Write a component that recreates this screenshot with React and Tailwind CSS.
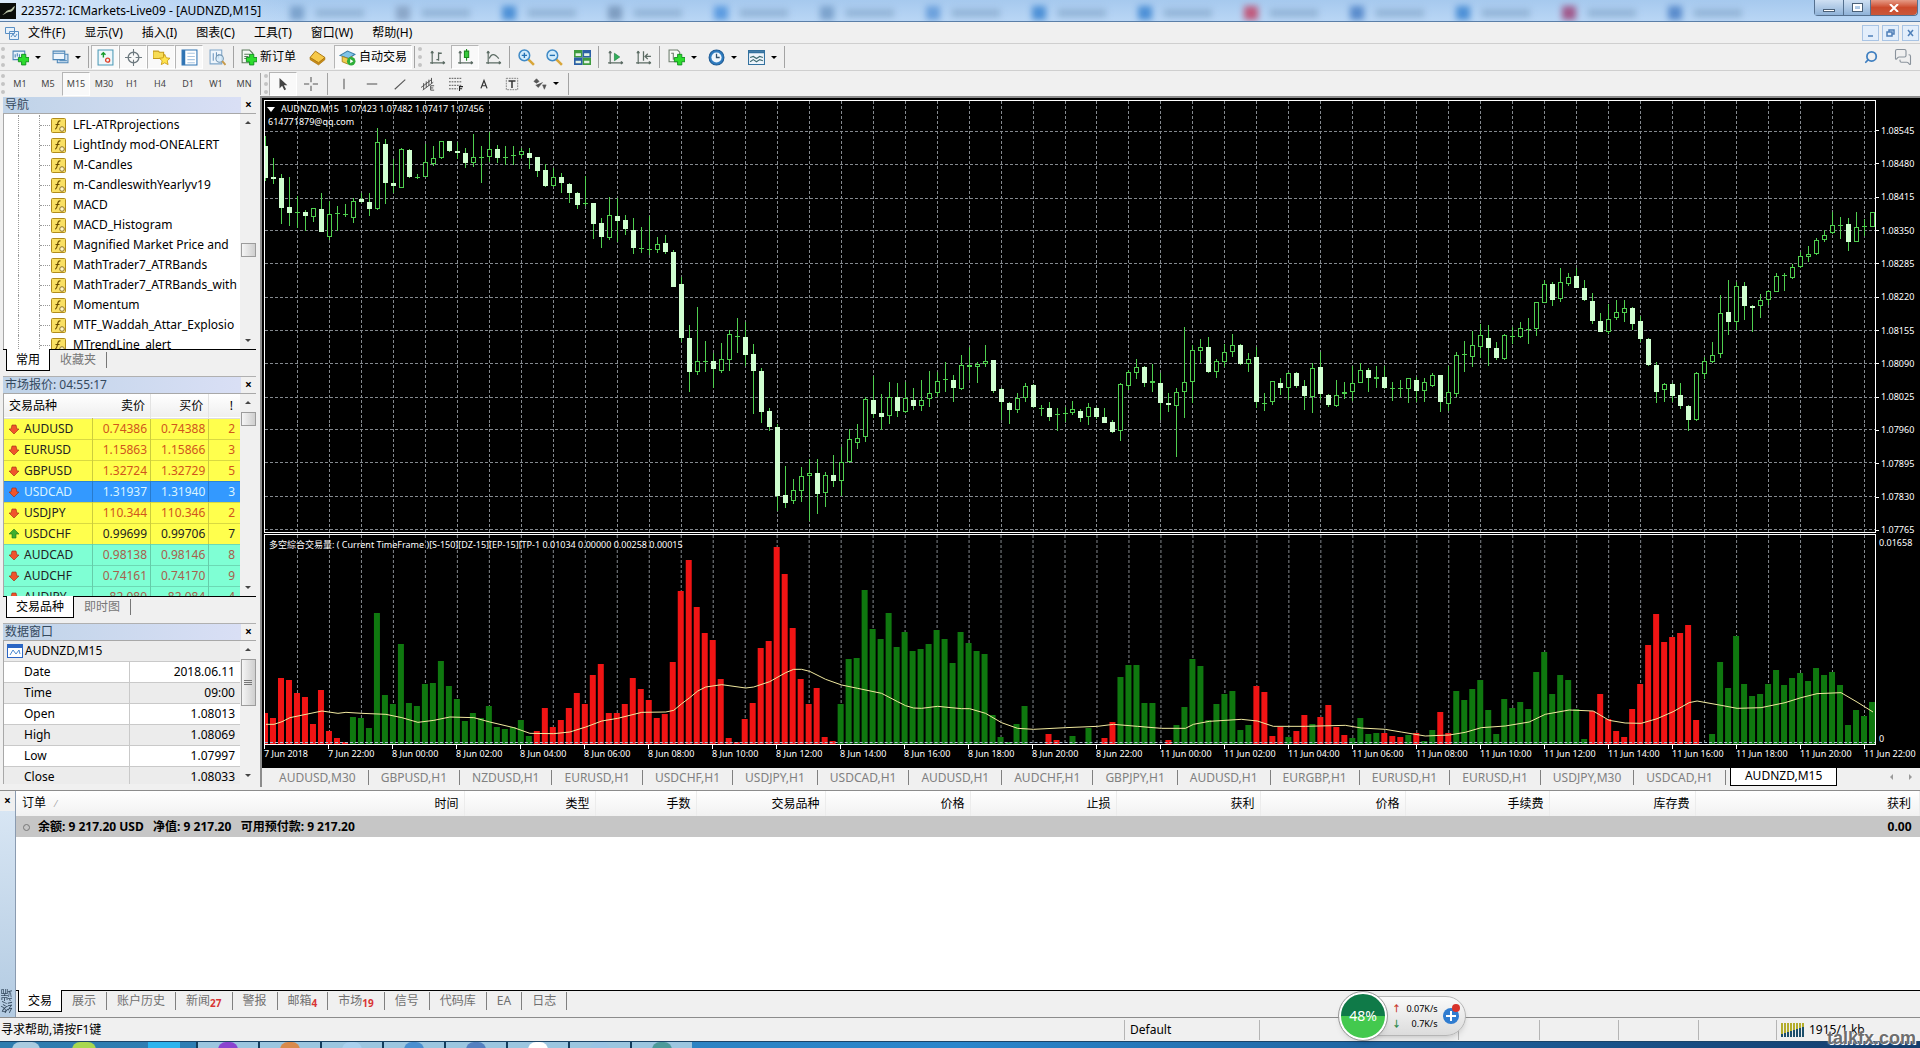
import { useState } from 'react'
import { Search, MessagesSquare } from 'lucide-react'

const FONT = "font-['Noto_Sans','Noto_Sans_CJK_SC',sans-serif]"

const MENUS = ['文件(F)', '显示(V)', '插入(I)', '图表(C)', '工具(T)', '窗口(W)', '帮助(H)']
const PERIODS = ['M1', 'M5', 'M15', 'M30', 'H1', 'H4', 'D1', 'W1', 'MN']
const INDICATORS = [
  'LFL-ATRprojections', 'LightIndy mod-ONEALERT', 'M-Candles', 'm-CandleswithYearlyv19', 'MACD', 'MACD_Histogram',
  'Magnified Market Price and', 'MathTrader7_ATRBands', 'MathTrader7_ATRBands_with', 'Momentum', 'MTF_Waddah_Attar_Explosio', 'MTrendLine_alert',
]
const QUOTES = [
  ['AUDUSD', '0.74386', '0.74388', 2, 'yellow'],
  ['EURUSD', '1.15863', '1.15866', 3, 'yellow'],
  ['GBPUSD', '1.32724', '1.32729', 5, 'yellow'],
  ['USDCAD', '1.31937', '1.31940', 3, 'selected'],
  ['USDJPY', '110.344', '110.346', 2, 'yellow'],
  ['USDCHF', '0.99699', '0.99706', 7, 'up'],
  ['AUDCAD', '0.98138', '0.98146', 8, 'mint'],
  ['AUDCHF', '0.74161', '0.74170', 9, 'mint'],
  ['AUDJPY', '82.080', '82.084', 4, 'mint'],
]
const QUOTE_ROW = {
  yellow: 'bg-[#ffff4d] text-[#d0561c]',
  selected: 'bg-[#3399ff] text-[#d9f4ff]',
  up: 'bg-[#ffff4d] text-[#222]',
  mint: 'bg-[#7fffd4] text-[#a8604c]',
}
const DATA_WINDOW = [['Date', '2018.06.11'], ['Time', '09:00'], ['Open', '1.08013'], ['High', '1.08069'], ['Low', '1.07997'], ['Close', '1.08033']]
const CHART_TABS = [
  'AUDUSD,M30', 'GBPUSD,H1', 'NZDUSD,H1', 'EURUSD,H1', 'USDCHF,H1', 'USDJPY,H1', 'USDCAD,H1', 'AUDUSD,H1', 'AUDCHF,H1',
  'GBPJPY,H1', 'AUDUSD,H1', 'EURGBP,H1', 'EURUSD,H1', 'EURUSD,H1', 'USDJPY,M30', 'USDCAD,H1', 'AUDNZD,M15',
]
const PRICES = ['1.08545', '1.08480', '1.08415', '1.08350', '1.08285', '1.08220', '1.08155', '1.08090', '1.08025', '1.07960', '1.07895', '1.07830', '1.07765']
const TIMES = [
  '7 Jun 2018', '7 Jun 22:00', '8 Jun 00:00', '8 Jun 02:00', '8 Jun 04:00', '8 Jun 06:00', '8 Jun 08:00', '8 Jun 10:00', '8 Jun 12:00',
  '8 Jun 14:00', '8 Jun 16:00', '8 Jun 18:00', '8 Jun 20:00', '8 Jun 22:00', '11 Jun 00:00', '11 Jun 02:00', '11 Jun 04:00', '11 Jun 06:00',
  '11 Jun 08:00', '11 Jun 10:00', '11 Jun 12:00', '11 Jun 14:00', '11 Jun 16:00', '11 Jun 18:00', '11 Jun 20:00', '11 Jun 22:00',
]
const ORDER_COLS = [
  ['时间', 'w-[260px]'], ['类型', 'w-[131px]'], ['手数', 'w-[101px]'], ['交易品种', 'w-[129px]'], ['价格', 'w-[145px]'], ['止损', 'w-[146px]'],
  ['获利', 'w-[144px]'], ['价格', 'w-[145px]'], ['手续费', 'w-[144px]'], ['库存费', 'w-[146px]'], ['获利', ''],
]
const TERMINAL_TABS = [['交易'], ['展示'], ['账户历史'], ['新闻', 27], ['警报'], ['邮箱', 4], ['市场', 19], ['信号'], ['代码库'], ['EA'], ['日志']]

// high, open/close top, open/close bottom, low, kind (f = falling, h = rising, d = doji), in thirds of a pixel
const parse = (text, base) => text.trim().split(/\s*;\s*/).map(row => {
  const [hi, top, bot, lo, kind] = row.split(' ')
  return { hi: (+hi + base) / 3, top: (+top + base) / 3, bot: (+bot + base) / 3, lo: (+lo + base) / 3, kind }
})
const CANDLES = [
  ...parse(`120 150 245 255 f;185 243 250 265 f;235 245 335 387 f;243 333 353 393 f;300 352 354 400 d;345 352 363 408 f;335 337 365 380 h;290 340 410 412 f;315 357 427 435 h;330 355 358 408 d;325 358 361 365 d;305 315 368 385 h;290 310 318 320 f;290 317 340 362 f;95 138 342 345 h;130 143 260 325 f;190 260 269 290 f;155 158 275 277 h;160 163 243 245 f;235 242 245 250 d;143 198 242 243 h;150 185 205 210 h;135 136 187 190 h;135 136 165 168 f;137 165 172 190 f;155 172 202 215 f;115 184 200 212 h;150 184 187 260 d;107 158 182 197 h;148 160 185 200 f;150 184 188 207 d;150 178 183 207 d;155 165 178 187 h;155 170 185 218 f;183 184 225 243 f;205 222 270 272 f;215 244 270 272 h;232 243 262 292 f;260 263 290 320 f;288 290 328 338 f;240 322 326 330 d;320 321 387 432 f;370 385 425 458 f;303 360 428 435 h;305 362 377 440 f;360 375 402 420 f;370 404 460 478 f;395 460 464 475 d;362 462 466 480 d;425 447 464 475 h;420 444 472 478 f;465 472 575 577 f;545 568 728 740 f;690 730 830 890 f;635 798 830 840 h;738 797 800 830 d;775 798 823 880 f;745 792 828 835 h;705 717 795 828 h;670 723 727 775 d;680 726 780 812 f;748 778 827 957 f;820 827 950 985 f;940 948 1000 1012 f;990 998 1207 1250 f;1115 1204 1227 1243 f;1155 1187 1222 1230 h;1120 1145 1190 1225 h;1095 1137 1145 1280 h;1095 1137 1200 1260 f`, -15),
  ...parse(`730 738 793 835 h;678 738 755 773 f;655 700 755 800 h;600 630 700 702 h;585 627 642 660 h;500 507 623 640 h;437 510 552 565 f;492 550 560 603 f;455 502 557 582 h;460 502 542 562 f;455 503 545 550 h;475 510 527 540 f;450 510 528 543 h;422 490 508 530 h;427 453 488 500 h;395 447 453 485 d;435 450 473 515 f;375 405 477 480 h;350 405 412 450 h;397 402 410 458 h;345 392 402 412 h;390 391 482 490 f;475 478 517 570 f;515 518 540 582 f;488 503 540 548 h;460 468 503 515 h;463 465 530 535 f;525 533 537 557 d;515 535 560 572 f;535 552 556 605 d;530 550 553 575 d;512 537 550 555 h;537 542 563 575 f;518 532 560 587 h;530 534 560 568 f;535 560 578 580 f;570 577 610 612 f;460 463 607 637 h;420 427 467 480 h;388 410 430 447 h;408 411 460 470 f;403 452 458 485 h;430 458 520 570 f;490 520 525 547 f;475 487 527 683 h;292 455 487 565 h;345 360 457 520 h;327 351 364 398 h;320 351 425 430 f;388 394 425 443 h;343 365 397 410 h;312 345 365 382 h;343 346 402 404 f;370 387 402 425 h;350 382 517 535 f;490 518 521 543 d;452 454 517 525 h;445 460 473 495 f;425 430 475 510 h;427 430 467 475 f;450 467 497 540 f;400 415 502 550 h;367 411 493 510 f;492 495 525 530 f;450 495 527 530 h;455 485 493 507 h`, 390),
  ...parse(`812 865 890 918 h;805 825 863 865 h;820 825 850 890 f;812 846 852 878 h;812 846 880 883 f;860 880 884 918 d;855 879 883 905 d;848 850 882 925 h;845 855 887 920 f;850 862 888 920 h;835 841 872 875 h;840 841 922 950 f;812 892 926 948 h;772 781 896 905 h;738 777 783 830 d;708 751 785 817 h;688 721 755 790 h;690 730 758 812 f;740 760 790 795 f;718 721 791 795 h;695 723 728 748 d;682 700 725 728 h;668 703 708 747 d;620 622 702 722 h;555 567 623 625 h;562 567 615 632 f;520 562 612 622 h;535 546 566 573 h;520 544 578 580 f;555 580 615 618 f;595 618 678 688 f;655 678 710 712 f;628 672 710 718 h;615 652 668 675 h;615 640 655 680 h;635 640 687 705 f;662 678 733 740 f;730 732 810 812 f;800 810 890 925 f;865 867 886 920 h;865 867 902 920 f;865 901 934 942 f;930 934 976 1010 f;830 835 976 978 h;785 798 838 852 h;742 780 800 805 h;600 655 778 790 h;555 652 681 720 f;560 574 682 705 h;562 574 632 675 f;630 632 640 712 f;598 616 634 668 h;585 589 616 630 h;535 544 590 592 h;535 541 546 588 d;508 516 550 552 h;470 484 517 520 h;452 478 487 500 h;430 436 476 480 h;405 419 434 440 h;352 391 415 418 h;365 390 394 432 d;370 388 440 468 f;352 397 440 442 h;372 394 397 422 d;350 352 395 397 h`, -15),
]

// histogram tops in thirds of a pixel; each run keeps its colour until the next letter
const VOLUMES = `r 545 560 442 447 487 498 578 478 600 620 634 g 557 560 592 247 492 518 340 517 525 458 455 390 465 503 570 547 560 525 588 595 588 568 615
r 600 532 588 567 532 487 520 432 400 547 545 520 440 475 508 562 550 392 180 87 227 307 328 445 620 634 563 517 352 330 48 130 290 445 520 472 618 630
g 518 384 382 178 295 325 247 347 303 360 355 340 298 325 395 303 337 360 370 553 618 634 578 525 640 640 r 608 627 640 g 614 640 592 640 r 620 573
g 438 403 403 515 515 640 r 627 g 583 528 383 405 567 520 488 480 597 583 r 465 484 615 588 g 618 r 600 552 g 580 r 558 523 588 612
g 622 562 610 606 r 605 615 618 g 612 r 605 g 630 598 r 542 605 g 480 508 475 447 538 610 505 530 512 533 422 363 490 433 447 535 623
r 540 490 565 600 618 535 458 343 250 333 317 307 283 568 g 640 610 393 472 315 460 495 488 460 418 463 440 425 450 411 433 422 463 583 538 555 512`
  .split(/\s+/)
  .reduce((acc, v) => {
    if (v === 'r' || v === 'g') acc.color = v
    else acc.bars.push({ top: Math.round((+v - 12) / 3), color: acc.color })
    return acc
  }, { bars: [], color: 'r' }).bars

const AVERAGE = '0,580 1,580 2,572 3,560 5,550 7,540 9,547 10,544 12,547 15,550 17,560 19,574 21,568 23,558 26,560 28,573 31,590 33,607 36,608 38,603 40,588 42,570 44,562 47,544 50,543 51,538 52,518 53,500 54,480 55,468 57,461 60,471 61,468 63,452 65,425 66,415 67,415 68,421 70,445 72,462 74,472 77,487 79,512 80,524 81,531 82,532 84,526 87,533 88,533 90,547 92,575 94,592 96,595 100,590 104,586 106,580 109,586 112,592 115,592 116,580 118,571 122,565 124,570 126,586 130,586 135,583 137,591 140,595 142,603 145,615 148,612 150,604 152,590 155,585 158,573 160,550 163,537 166,540 168,568 170,576 172,577 174,563 176,542 178,515 179,510 182,523 184,532 187,530 190,515 192,500 194,488 197,485 199,513 201,543'
  .split(' ')
  .map(p => p.split(',').map(Number))
  .map(([i, y]) => `${i * 8 + 1},${(y - 12) / 3}`)
  .join(' ')

const Grid = ({ height, rows = [] }) => (
  <g stroke="#858a8f" strokeDasharray="3 2" shapeRendering="crispEdges">
    {Array.from({ length: 50 }, (_, i) => <line key={i} x1={32.5 + i * 32} x2={32.5 + i * 32} y1="0" y2={height} />)}
    {rows.map(y => <line key={y} x1="0" x2="1611" y1={y} y2={y} />)}
  </g>
)

function PricePlot() {
  return (
    <svg viewBox="0 0 1611 433" preserveAspectRatio="none" className="block w-full h-full">
      <Grid height={433} rows={PRICES.map((_, i) => Math.round(30 + i * 33.33) + 0.5)} />
      <g shapeRendering="crispEdges" stroke="#4fd04f">
        {CANDLES.map((c, i) => {
          const x = i * 8
          const top = Math.round(c.top)
          const h = Math.max(1, Math.round(c.bot) - top)
          return (
            <g key={i}>
              <line x1={x + 0.5} x2={x + 0.5} y1={Math.round(c.hi)} y2={Math.round(c.lo)} />
              {c.kind === 'd' && <line x1={x - 2} x2={x + 3} y1={top + 0.5} y2={top + 0.5} />}
              {c.kind === 'f' && <rect x={x - 2} y={top} width="5" height={h} fill="#d0ffd0" stroke="none" />}
              {c.kind === 'h' && <rect x={x - 1.5} y={top + 0.5} width="4" height={Math.max(1, h - 1)} fill="#000" />}
            </g>
          )
        })}
      </g>
    </svg>
  )
}

function VolumePlot() {
  return (
    <svg viewBox="0 0 1611 209" preserveAspectRatio="none" className="block w-full h-full">
      <Grid height={209} />
      {VOLUMES.map((v, i) => v.top < 209 && (
        <rect key={i} x={i * 8 - 3} y={v.top} width="6" height={209 - v.top} fill={v.color === 'r' ? '#f01414' : '#0f780f'} />
      ))}
      <line x1="0" x2="1611" y1="207.5" y2="207.5" stroke="#a9bcd6" strokeDasharray="3 2" />
      <polyline points={AVERAGE} fill="none" stroke="#f2eaa0" />
    </svg>
  )
}

/* toolbar glyphs, all on a 16px box */
const Icon = ({ children, small }) => (
  <svg viewBox="0 0 16 16" fill="none" className={`shrink-0 ${small ? 'size-[14px]' : 'size-[17px]'}`}>{children}</svg>
)
const Plus = () => <path d="M9 5h4v3h3v4h-3v3h-4v-3H6V8h3z" fill="#2ddc2d" stroke="#0a8a1a" strokeWidth=".8" />
const Axes = () => <path d="M3 2v12M1 13h14M3 2 1.8 4M3 2l1.200 2M15 13l-2-1.200M15 13l-2 1.200" stroke="#5b6b63" strokeWidth="1.100" />
const ICONS = {
  newChart: <><path d="M1 2h11v8H1z" fill="#e6f1fb" stroke="#4d86b8" /><path d="M3 5v3M5 4v3M7 5v3" stroke="#4d86b8" /><Plus /></>,
  profiles: <><path d="M5 5h10v8H5z" fill="#d4e4f3" stroke="#4d86b8" /><path d="M1 2h11v8H1z" fill="#eef5fc" stroke="#4d86b8" /><path d="M1 4h11" stroke="#4d86b8" /><path d="M7 11h7" stroke="#4d86b8" /></>,
  watch: <><path d="M1 1h14v14H1z" fill="#eef7fb" stroke="#4d9ab8" /><path d="M6 8V3.500M4 5.500l2-2 2 2" stroke="#159a2b" strokeWidth="1.300" /><circle cx="10" cy="10.500" r="1.900" stroke="#e0402a" strokeWidth="1.300" /></>,
  target: <><circle cx="8" cy="8" r="5" stroke="#6e7a80" strokeWidth="1.300" /><path d="M8 0v6M8 10v6M0 8h6M10 8h6" stroke="#6e7a80" /></>,
  navigator: <><path d="M0 2h5l1 1h4v6H0z" fill="#f7dc55" stroke="#c49a1a" /><path d="m11 5 1.500 3.300 3.500.4-2.600 2.400.8 3.600L11 13l-3.200 1.700.8-3.600L6 8.700l3.500-.4z" fill="#ffe44d" stroke="#c99a10" strokeWidth=".8" /></>,
  dataWin: <><path d="M1 1h14v14H1z" fill="#fff" stroke="#2f74b4" /><path d="M1 1h3v14H1z" fill="#2f74b4" /><path d="M6 4h7M6 7h7M6 10h7M6 13h7" stroke="#a9c6e2" /></>,
  tester: <><path d="M1 1h11v13H1z" fill="#eef5fc" stroke="#7fa6c9" /><path d="M4 4v7M7 3v6M9 5v4" stroke="#6a95bd" /><circle cx="10" cy="9" r="3.500" fill="#d7ecfb" fillOpacity=".8" stroke="#7294b0" /><path d="m12.500 11.500 3 3.500" stroke="#c79a4a" strokeWidth="1.800" /></>,
  order: <><path d="M2 1h7l3 3v9H2z" fill="#f4f8f4" stroke="#5d7a5d" /><path d="M4 5h5M4 7h4M4 9h3" stroke="#5d7a5d" /><Plus /></>,
  gold: <><path d="m1 8 5-6 9 6-6 5z" fill="#f7c948" stroke="#a8750f" strokeWidth=".9" /><path d="m1 8 8 5 6-5v2l-6 5-8-5z" fill="#c98d18" stroke="#a8750f" strokeWidth=".6" /></>,
  auto: <><path d="M1 6 8 2l7 3-6 4z" fill="#7fc4e8" stroke="#3a7ea6" /><path d="M3 7v5l5 2 4-3V7L9 9z" fill="#f0cd50" stroke="#a68018" strokeWidth=".8" /><circle cx="11.500" cy="11.500" r="4" fill="#2fae3a" /><path d="m10.500 9.500 3 2-3 2z" fill="#fff" /></>,
  bars: <><Axes /><path d="M9 3v8M9 4h3M7 10h2" stroke="#5b6b63" strokeWidth="1.200" /></>,
  candle: <><Axes /><path d="M9 0v11" stroke="#188a1c" /><path d="M7 2h4v6H7z" fill="#36c93a" stroke="#188a1c" /></>,
  line: <><Axes /><path d="M4 9c2-5 5-5 9 0" stroke="#5b6b63" strokeWidth="1.200" /></>,
  zoomIn: <><path d="m9.500 9.500 5.500 5.500" stroke="#d8a63a" strokeWidth="2.400" /><circle cx="6" cy="6" r="5" fill="#d3ecfb" stroke="#3f8ac6" strokeWidth="1.400" /><path d="M6 3.500v5M3.500 6h5" stroke="#2472b4" strokeWidth="1.300" /></>,
  zoomOut: <><path d="m9.500 9.500 5.500 5.500" stroke="#d8a63a" strokeWidth="2.400" /><circle cx="6" cy="6" r="5" fill="#d3ecfb" stroke="#3f8ac6" strokeWidth="1.400" /><path d="M3.500 6h5" stroke="#2472b4" strokeWidth="1.300" /></>,
  tiles: <><path d="M0 1h8v7H0zM8 8h8v7H8z" fill="#3f9c3f" /><path d="M8 1h8v7H8zM0 8h8v7H0z" fill="#2b5fa5" /><path d="M1.500 4h5v2.500h-5zM9.500 4h5v2.500h-5zM1.500 11h5v2.500h-5zM9.500 11h5v2.500h-5z" fill="#e4f2e4" /></>,
  scroll: <><Axes /><path d="m7 4 5 3.500L7 11z" fill="#2fae5a" stroke="#1d7a3c" strokeWidth=".6" /></>,
  shift: <><Axes /><path d="M8 2v9M15 7h-5M12 4.500 9.500 7 12 9.500" stroke="#5b6b63" strokeWidth="1.200" /></>,
  indicator: <><path d="M1 1h8l2 2v9H1z" fill="#f8faf8" stroke="#6d7d6d" /><path d="M3 4h2v6" stroke="#6d7d6d" /><Plus /></>,
  clock: <><circle cx="8" cy="8" r="7" fill="#2f7cc0" stroke="#1d5a94" /><circle cx="8" cy="8" r="4.800" fill="#eef6fd" /><path d="M8 4.500V8h3" stroke="#33516b" strokeWidth="1.200" /></>,
  template: <><path d="M.5 1.500h15v13H.5z" fill="#eef5fc" stroke="#33719f" /><path d="M0 3h16" stroke="#33719f" strokeWidth="2" /><path d="m2 8 3-1 3 2 3-2 3 1M2 12l3-2 3 2 3-2 3 1" stroke="#3d6a70" /></>,
  cursor: <path d="M4 1v12l3-3 2.500 5 2-1L9 9.500h4z" fill="#444" />,
  cross: <path d="M8 0v6M8 10v6M0 8h6M10 8h6" stroke="#555" strokeWidth="1.200" />,
  vline: <path d="M8 2v12" stroke="#555" strokeWidth="1.200" />,
  hline: <path d="M2 8h12" stroke="#555" strokeWidth="1.200" />,
  trend: <path d="M2 14 14 3" stroke="#555" strokeWidth="1.200" />,
  channel: <><path d="m0 12 12-9M2 15 14 6M3 7v7M6 5v7M9 3v7M12 1v6" stroke="#444" /><path d="M15 10h-4v5h4M11 12.500h3" stroke="#444" /></>,
  fibo: <><path d="M0 1.500h15M0 5.500h15M0 9.500h15M0 13.500h10" stroke="#444" strokeDasharray="2 1" /><path d="M12 16v-5h4M12 13.500h3" stroke="#222" strokeWidth="1.200" /></>,
  text: <path d="m4.500 13 3.500-9 3.500 9M6 10h4" stroke="#333" strokeWidth="1.400" />,
  label: <><path d="M1.500 1.500h13v13h-13z" stroke="#777" strokeDasharray="2 1" /><path d="M4 4.500h8M8 4.500v8" stroke="#333" strokeWidth="1.700" /></>,
  arrows: <path d="m4 2 3 3-3 2-3-2zM3 9l3 3 5-6M11 9h4l-2 5z" fill="#555" stroke="#555" strokeWidth=".7" />,
}

const Sep = () => <span className="w-px h-[22px] bg-[#a3a3a3] mx-[2px]" />
const Grip = () => <span className="w-[4px] h-[20px] mx-px border-l-4 border-dotted border-[#c4c4c4]" />
const Caret = () => <span className="border-x-[3px] border-t-[3px] border-x-transparent border-t-black" />

function Tool({ name, label, active, menu, small, width = 'w-7' }) {
  return (
    <button aria-label={label || name}
      className={`h-6 flex items-center justify-center shrink-0 ${menu ? 'w-10 gap-[6px]' : label ? 'px-1 gap-[3px]' : width} ${active ? 'bg-[#f9f9f9] border border-[#b5b5b5] border-b-white border-r-white' : ''}`}>
      <Icon small={small}>{ICONS[name]}</Icon>
      {label && <span className="text-[12px] leading-4 whitespace-nowrap">{label}</span>}
      {menu && <Caret />}
    </button>
  )
}

function PanelTitle({ children }) {
  return (
    <div className="flex h-4 items-center bg-gradient-to-r from-[#bfd3e8] to-[#dbe0f6] text-[12px] leading-4 text-[#34495e]">
      <span className="flex-1 truncate pl-[2px]">{children}</span>
      <button aria-label="关闭" className="w-[15px] h-4 bg-[#f0f0f0] text-black font-bold text-[12px] leading-4">×</button>
    </div>
  )
}

function ScrollBar({ thumb, size }) {
  return (
    <div className="w-4 shrink-0 bg-[#f0f0f0] flex flex-col items-center py-[7px]">
      <span className="border-x-[3px] border-b-[3px] border-x-transparent border-b-[#444]" />
      <span className={thumb} />
      <span className={`w-[15px] shrink-0 border border-[#9c9c9c] bg-gradient-to-r from-[#f5f5f5] to-[#cfcfcf] flex flex-col items-center justify-center gap-px ${size}`}>
        {size !== 'h-[14px]' && [0, 1, 2].map(i => <i key={i} className="w-2 h-px bg-[#777]" />)}
      </span>
      <span className="flex-1" />
      <span className="border-x-[3px] border-t-[3px] border-x-transparent border-t-[#444]" />
    </div>
  )
}

function PanelTabs({ items }) {
  return (
    <div className="flex h-[22px] border-t border-black pl-[3px] text-[12px] leading-5">
      {items.map((t, i) => (
        <button key={t} className={i === 0
          ? '-mt-px h-[22px] px-[9px] border border-t-0 border-black bg-white text-black'
          : 'h-4 mt-[2px] px-[10px] border-r border-[#777] text-[#777] leading-4'}>{t}</button>
      ))}
    </div>
  )
}

function Sidebar() {
  return (
    <aside className="w-[260px] shrink-0 flex flex-col pl-[3px] pr-1 pt-px">
      <section>
        <PanelTitle>导航</PanelTitle>
        <div className="h-[236px] flex bg-white border-l border-t border-[#a8a8a8] overflow-hidden">
          <ul className="flex-1 min-w-0 pl-[14px] pt-px overflow-hidden">
            {INDICATORS.map(n => (
              <li key={n} className="h-5 flex items-center text-[12px] leading-5 whitespace-nowrap border-l border-dotted border-[#999]">
                <span className="w-[21px] h-5 border-r border-dotted border-[#999] shrink-0" />
                <span className="w-[10px] border-t border-dotted border-[#999] shrink-0" />
                <svg width="15" height="15" viewBox="0 0 15 15" className="mx-px shrink-0">
                  <rect x=".5" y=".5" width="14" height="14" rx="1" fill="#f9e064" stroke="#b18c1c" />
                  <path d="M9.500 3C7.500 2.500 7 4 6.500 6.500S5.500 11 4 11M4.500 6.500h4" stroke="#6b4d00" fill="none" strokeWidth="1.200" />
                  <circle cx="11" cy="11" r="2.300" fill="#fff6c4" stroke="#8f7430" />
                </svg>
                <span className="pl-[6px]">{n}</span>
              </li>
            ))}
          </ul>
          <ScrollBar thumb="h-[119px]" size="h-[14px]" />
        </div>
        <PanelTabs items={['常用', '收藏夹']} />
      </section>

      <section className="mt-[5px] border-t border-[#b0b0b0]">
        <PanelTitle>市场报价: 04:55:17</PanelTitle>
        <div className="h-[203px] flex border-l border-t border-[#a8a8a8] overflow-hidden bg-white">
          <table className="flex-1 table-fixed border-collapse text-[12px] leading-5">
            <thead>
              <tr className="h-6 bg-gradient-to-b from-white to-[#efefef] border-b border-[#ddd]">
                <th className="w-[88px] text-left font-normal pl-[5px]">交易品种</th>
                <th className="w-[58px] text-right font-normal pr-[5px] border-r border-[#e3e3e3]">卖价</th>
                <th className="w-[58px] text-right font-normal pr-[5px] border-r border-[#e3e3e3]">买价</th>
                <th className="w-[31px] text-right font-normal pr-[7px]">!</th>
              </tr>
            </thead>
            <tbody>
              {QUOTES.map(([name, bid, ask, spread, tone]) => (
                <tr key={name} className={`h-[21px] border-b border-black/15 ${QUOTE_ROW[tone]}`}>
                  <td className={`border-r border-black/20 ${tone === 'selected' ? '' : 'text-[#222]'}`}>
                    <span className="flex items-center pl-[5px] gap-[5px]">
                      <svg width="10" height="10" viewBox="0 0 10 10">
                        {tone === 'up'
                          ? <path d="m5 0 5 5H7v4H3V5H0z" fill="#3fae2e" stroke="#1d7214" strokeWidth=".6" />
                          : <path d="m5 10 5-5H8L7 1H3L2 5H0z" fill="#f0542c" stroke="#9c2a10" strokeWidth=".6" />}
                      </svg>
                      {name}
                    </span>
                  </td>
                  <td className="text-right pr-[3px] border-r border-black/20">{bid}</td>
                  <td className="text-right pr-[3px] border-r border-black/20">{ask}</td>
                  <td className="text-right pr-[5px]">{spread}</td>
                </tr>
              ))}
            </tbody>
          </table>
          <ScrollBar thumb="h-[8px]" size="h-[14px]" />
        </div>
        <PanelTabs items={['交易品种', '即时图']} />
      </section>

      <section className="mt-[5px] border-t border-[#b0b0b0]">
        <PanelTitle>数据窗口</PanelTitle>
        <div className="h-[144px] flex border-l border-t border-[#a8a8a8] bg-white overflow-hidden">
          <div className="flex-1 text-[12px] leading-5">
            <div className="h-5 flex items-center gap-[2px] pl-[3px] bg-[#ececec]">
              <svg width="16" height="14" viewBox="0 0 16 14">
                <rect x=".5" y=".5" width="15" height="13" fill="#fff" stroke="#2c66c4" />
                <path d="M0 0h16v4H0z" fill="#2c66c4" />
                <path d="m3 11 3-5 3 4 3-4 1 4" fill="none" stroke="#4c8ad0" />
              </svg>
              AUDNZD,M15
            </div>
            <table className="w-full table-fixed border-collapse">
              <tbody>
                {DATA_WINDOW.map(([k, v]) => (
                  <tr key={k} className="h-[21px] even:bg-[#ececec] border-t border-[#c9c9c9]">
                    <th className="w-[125px] pl-5 text-left font-normal border-r border-[#c9c9c9]">{k}</th>
                    <td className="text-right pr-[5px]">{v}</td>
                  </tr>
                ))}
              </tbody>
            </table>
          </div>
          <ScrollBar thumb="h-[8px]" size="h-[47px]" />
        </div>
      </section>
    </aside>
  )
}

function Chart() {
  return (
    <div className="bg-black text-white text-[9px] leading-[10px] pl-[2px] pt-[2px] border-t-2 border-[#8c8c8c] overflow-hidden">
      <div className="flex h-[433px]">
        <div className="relative flex-1 min-w-0 border border-white">
          <PricePlot />
          <div className="absolute left-[2px] top-[3px] flex items-center gap-[6px] whitespace-pre">
            <span className="border-x-[4px] border-t-[5px] border-x-transparent border-t-white" />
            AUDNZD,M15  1.07423 1.07482 1.07417 1.07456
          </div>
          <div className="absolute left-[3px] top-[16px]">614771879@qq.com</div>
        </div>
        <div className="w-[44px] shrink-0 flex flex-col pt-[14px] -mb-[14px]">
          {PRICES.map(p => (
            <div key={p} className="flex-1 flex items-center gap-[2px]"><i className="w-[3px] h-px bg-white" />{p}</div>
          ))}
        </div>
      </div>
      <div className="flex h-[211px] mt-px">
        <div className="relative flex-1 min-w-0 border border-white">
          <VolumePlot />
          <div className="absolute left-1 top-[5px]">多空綜合交易量: ( Current TimeFrame )[S-150][DZ-15][EP-15][TP-1 0.01034 0.00000 0.00258 0.00015</div>
        </div>
        <div className="w-[44px] shrink-0 flex flex-col justify-between pl-[3px] pt-1 pb-px">
          <span>0.01658</span>
          <span>0</span>
        </div>
      </div>
      <div className="flex h-[22px] whitespace-nowrap">
        {TIMES.map(t => (
          <div key={t} className="w-16 shrink-0">
            <i className="block w-px h-[4px] bg-white" />
            <span className="block">{t}</span>
          </div>
        ))}
      </div>
    </div>
  )
}

function ChartTabs() {
  const [current, setCurrent] = useState(CHART_TABS.length - 1)
  return (
    <div className="flex h-[20px] border-t border-black bg-[#f0f0f0] pl-[5px] text-[12px] leading-[18px] text-[#808080] whitespace-nowrap overflow-hidden">
      {CHART_TABS.map((t, i) => (
        <button key={i} onClick={() => setCurrent(i)}
          className={i === current
            ? '-mt-px h-[19px] px-[14px] ml-1 bg-white text-black border border-t-0 border-black'
            : 'h-[15px] mt-[2px] px-3 leading-[15px] border-r border-[#808080]'}>
          {t}
        </button>
      ))}
      <span className="ml-auto flex gap-4 pr-2 pt-[6px]">
        <button aria-label="上一个" className="size-0 border-y-[3px] border-r-[3px] border-y-transparent border-r-[#9a9a9a]" />
        <button aria-label="下一个" className="size-0 border-y-[3px] border-l-[3px] border-y-transparent border-l-[#9a9a9a]" />
      </span>
    </div>
  )
}

function Terminal() {
  return (
    <section className="flex flex-1 min-h-0 mt-[3px] border-t border-[#8c8c8c] bg-white">
      <div className="w-4 shrink-0 flex flex-col justify-between bg-gradient-to-b from-[#dbe8f5] to-[#b3cbe2] border-r border-[#8a9bb0] text-[12px] text-[#34495e]">
        <button aria-label="关闭" className="h-5 bg-[#f0f0f0] font-bold text-black leading-4 shrink-0 text-[12px]">×</button>
        <span className="[writing-mode:vertical-rl] rotate-180 leading-[15px] pt-1">终端</span>
      </div>
      <div className="flex-1 min-w-0 flex flex-col">
        <table className="w-full table-fixed border-collapse text-[12px] leading-5">
          <thead>
            <tr className="h-[25px] bg-gradient-to-b from-white to-[#f1f1f1]">
              <th className="w-[188px] font-normal text-left pl-[6px]">订单 <span className="pl-[6px] text-[#999] text-[9px]">⁄</span></th>
              {ORDER_COLS.map(([c, w], i) => <th key={i} className={`${w} font-normal text-right pr-[5px] border-r border-[#ececec] last:pr-2`}>{c}</th>)}
            </tr>
          </thead>
          <tbody>
            <tr className="h-[21px] bg-[#c6c6c6] font-bold">
              <td colSpan={11} className="pl-[7px]">
                <span className="inline-block size-[7px] rounded-full border border-[#777] mr-2" />
                余额: 9 217.20 USD&nbsp;&nbsp; 净值: 9 217.20&nbsp;&nbsp; 可用预付款: 9 217.20
              </td>
              <td className="text-right pr-2">0.00</td>
            </tr>
          </tbody>
        </table>
        <div className="flex-1" />
        <div className="flex h-[27px] bg-[#f0f0f0] border-t border-black pl-[2px] text-[12px] text-[#707070]">
          {TERMINAL_TABS.map(([t, n], i) => (
            <button key={t} className={i === 0
              ? '-mt-px h-[22px] px-[9px] bg-white text-black border border-t-0 border-black leading-5'
              : 'h-[18px] mt-px px-[10px] border-r border-[#808080] leading-[17px] flex'}>
              {t}{n && <span className="text-[10px] font-bold text-[#d83434] pt-[4px] leading-[14px]">{n}</span>}
            </button>
          ))}
        </div>
      </div>
    </section>
  )
}

const BLOBS = ['bg-[#7ba2cc]', 'bg-[#8aa6c8]', 'bg-[#4d90d6]', 'bg-[#7d9cc0]', 'bg-[#5c9be0]', 'bg-[#7ba2cc]', 'bg-[#6ba0dc]', 'bg-[#4d90d6]', 'bg-[#4d90d6]', 'bg-[#c05a7c]', 'bg-[#5a8ccc]', 'bg-[#4d90d6]', 'bg-[#a05a8c]', 'bg-[#5a8ccc]']

function TitleBar() {
  return (
    <header className="relative h-[22px] flex items-center bg-gradient-to-b from-[#a6c9ee] to-[#b9d6f5] border-b border-[#5b7fa8] overflow-hidden">
      <div className="absolute inset-0 flex items-center pl-[290px] pt-1 blur-[3px]">
        {BLOBS.map((c, i) => (
          <span key={i} className="w-[106px] shrink-0 flex items-center gap-3">
            <i className={`size-[14px] ${c}`} /><i className="w-12 h-2 bg-[#86a8cc]/70" />
          </span>
        ))}
      </div>
      <div className="relative flex items-center gap-[5px] h-full pr-8 bg-gradient-to-r from-[#dceafb] to-transparent">
        <svg width="16" height="16" viewBox="0 0 16 16">
          <rect width="16" height="16" fill="#0b0d0b" />
          <path d="M2 12c3-1 4-5 7-5s3-3 6-4c-1 4-3 6-6 6s-4 3-7 3z" fill="#b9c2a8" />
        </svg>
        <h1 className="text-[12px] leading-5">223572: ICMarkets-Live09 - [AUDNZD,M15]</h1>
      </div>
      <div className="relative ml-auto mr-[2px] self-start flex h-4 border border-t-0 border-[#55708f] rounded-b text-white">
        <button aria-label="最小化" className="w-[29px] bg-gradient-to-b from-[#cfe0f3] to-[#8fb2d8] border-r border-[#55708f] flex justify-center items-end pb-[3px]"><i className="w-3 h-[3px] bg-white border border-[#4a6078]" /></button>
        <button aria-label="还原" className="w-[27px] bg-gradient-to-b from-[#cfe0f3] to-[#8fb2d8] border-r border-[#55708f] flex justify-center items-center"><i className="w-[9px] h-[7px] border-2 border-white outline outline-[#4a6078]" /></button>
        <button aria-label="关闭" className="w-[46px] bg-gradient-to-b from-[#e59a86] via-[#cc4a2c] to-[#c9573a] rounded-br flex justify-center items-center">
          <svg width="10" height="8" viewBox="0 0 10 8"><path d="m1 0 8 8M9 0 1 8" stroke="white" strokeWidth="2" /></svg>
        </button>
      </div>
    </header>
  )
}

function MenuBar() {
  return (
    <nav className="h-[21px] flex items-center pl-[5px] text-[12px] leading-5">
      <svg width="14" height="14" viewBox="0 0 14 14" fill="none" stroke="#5a8fc4">
        <path d="M.5 1.500h9v6h-9zM4.500 5.500h9v8h-9z" fill="#e8f2fb" /><path d="m6 11 2-3 2 3 2-3" />
      </svg>
      {MENUS.map(m => <button key={m} className="px-[9px] mr-px">{m}</button>)}
      <div className="ml-auto flex gap-[3px] pr-px">
        {['M3 9h5', 'M4 5V3h5v4H7M2 5h5v4H2z', 'm3 3 5 6M8 3 3 9'].map((d, i) => (
          <button key={d} aria-label={['最小化', '还原', '关闭'][i]} className="w-[17px] h-4 border border-[#a9c4e4] bg-[#e3eefb] flex items-center justify-center">
            <svg width="11" height="12" viewBox="0 0 11 12"><path d={d} fill="none" stroke="#4f7fb8" strokeWidth="1.500" /></svg>
          </button>
        ))}
      </div>
    </nav>
  )
}

function Toolbars() {
  return (
    <>
      <div className="h-[27px] flex items-center border-t border-[#cfcfcf]">
        <Grip />
        <Tool name="newChart" menu /><Tool name="profiles" menu />
        <Sep />
        <Tool name="watch" active /><Tool name="target" active /><Tool name="navigator" active /><Tool name="dataWin" active /><Tool name="tester" />
        <Sep />
        <Tool name="order" label="新订单" /><Tool name="gold" width="w-[34px]" /><Tool name="auto" label="自动交易" active />
        <Sep /><Grip />
        <Tool name="bars" /><Tool name="candle" active /><Tool name="line" />
        <Sep />
        <Tool name="zoomIn" /><Tool name="zoomOut" /><Tool name="tiles" />
        <Sep />
        <Tool name="scroll" /><Tool name="shift" />
        <Sep />
        <Tool name="indicator" menu /><Tool name="clock" menu /><Tool name="template" menu />
        <Sep />
        <div className="ml-auto flex items-center gap-4 pr-2">
          <button aria-label="搜索"><Search size={14} className="text-[#3f7fc0] -scale-x-100" strokeWidth={3} /></button>
          <button aria-label="消息"><MessagesSquare size={18} className="text-[#8a939c]" strokeWidth={1.5} /></button>
        </div>
      </div>
      <div className="h-[26px] flex items-center border-t border-[#cfcfcf]">
        <Grip />
        {PERIODS.map(p => (
          <button key={p} className={`h-6 w-7 shrink-0 text-[9px] text-[#444] ${p === 'M15' ? 'bg-[#f9f9f9] border border-[#b5b5b5] border-b-white border-r-white' : ''}`}>{p}</button>
        ))}
        <Sep /><Grip />
        <Tool name="cursor" active small /><Tool name="cross" small />
        <Sep />
        <Tool name="vline" small /><Tool name="hline" small /><Tool name="trend" small /><Tool name="channel" small /><Tool name="fibo" small /><Tool name="text" small /><Tool name="label" small /><Tool name="arrows" menu small />
        <Sep />
      </div>
    </>
  )
}

function StatusBar() {
  return (
    <footer className="h-6 flex items-center border-t border-[#8c8c8c] text-[12px] leading-5">
      <span className="flex-1 pl-px">寻求帮助,请按F1键</span>
      <span className="w-[135px] border-l border-[#b5b5b5] pl-[5px]">Default</span>
      {['w-[199px]', 'w-[81px]', 'w-[79px]', 'w-[80px]', 'w-[78px]'].map(w => <span key={w} className={`${w} h-5 border-l border-[#b5b5b5]`} />)}
      <span className="w-[144px] h-5 flex items-center gap-1 border-l border-[#b5b5b5] pl-1">
        <svg width="24" height="16" viewBox="0 0 24 16">
          {[0, 1, 2, 3, 4, 5, 6, 7].map(i => (
            <g key={i}>
              <rect x={i * 3} y="1" width="2" height="14" fill="#b3ad2c" />
              <rect x={i * 3} y={12 - i} width="2" height={3 + i} fill="#1c4f6b" />
            </g>
          ))}
        </svg>
        1915/1 kb
      </span>
    </footer>
  )
}

function TaskBar() {
  const dots = ['bg-[#8a44d0]', 'bg-[#d98a4c]', 'bg-[#a9d0ee]', 'bg-[#4a8fd0]', 'bg-[#5580c0]', 'bg-white', 'bg-[#9ac4e4]', 'bg-[#4d9a9a]']
  return (
    <div className="h-[7px] flex bg-gradient-to-r from-[#2f7cae] via-[#2b86cc] to-[#123c6c] border-t border-[#1b4468] overflow-hidden">
      <div className="w-[196px] flex gap-8 pl-3 shrink-0">
        <i className="w-7 h-4 rounded-full bg-[#a9cbe0]" /><i className="w-6 h-4 rounded-full bg-[#a8d850]" /><i className="w-8 h-4 ml-5 bg-[#2cb4ee]" />
      </div>
      {dots.map((d, i) => (
        <div key={i} className="w-[62px] shrink-0 flex justify-center border-l-2 border-[#123c5c] bg-[#9cc6e0]"><i className={`w-5 h-4 rounded-full ${d}`} /></div>
      ))}
    </div>
  )
}

/* floating memory / traffic ball */
function SpeedBall() {
  return (
    <div className="absolute isolate right-[454px] bottom-[7px] h-[50px] flex items-center text-[9px] leading-[12px]">
      <div className="relative size-[48px] rounded-full border-2 border-white outline outline-[#9a9a9a] bg-gradient-to-b from-[#0f7a48] from-50% to-[#43c94e] to-50% flex items-center justify-center text-white text-[14px] shadow-md">48%</div>
      <div className="-ml-6 pl-[28px] pr-[6px] w-[103px] h-10 rounded-r-full border border-[#b5b5b5] bg-gradient-to-b from-[#fafafa] to-[#dcdcdc] -z-10 shadow-md flex items-center justify-between">
        <div className="flex flex-col gap-[3px] font-bold"><span className="text-[#c8392b]">↑</span><span className="text-[#2d8a4a]">↓</span></div>
        <div className="text-right flex flex-col gap-[3px]"><span>0.07K/s</span><span>0.7K/s</span></div>
        <button aria-label="加速" className="relative size-4 rounded-full bg-[#2f7cd0] flex items-center justify-center">
          <svg width="10" height="10" viewBox="0 0 10 10"><path d="M5 0v10M0 5h10" stroke="white" strokeWidth="2" /></svg>
          <i className="absolute -right-px -top-1 size-2 rounded-full bg-[#d8322a]" />
        </button>
      </div>
    </div>
  )
}

export default function App() {
  return (
    <div className={`relative isolate min-h-screen flex flex-col overflow-hidden bg-[#f0f0f0] text-black ${FONT}`}>
      <TitleBar />
      <MenuBar />
      <Toolbars />
      <div className="flex">
        <Sidebar />
        <main className="flex-1 min-w-0 border-l-2 border-[#8c8c8c]">
          <Chart />
          <ChartTabs />
        </main>
      </div>
      <Terminal />
      <StatusBar />
      <TaskBar />
      <SpeedBall />
      <div className="absolute right-1 bottom-0 text-[18px] leading-5 font-bold text-[#6e6e6e] font-['Liberation_Sans',sans-serif] [text-shadow:0_0_2px_white,1px_1px_0_white]">talkfx.com</div>
    </div>
  )
}
